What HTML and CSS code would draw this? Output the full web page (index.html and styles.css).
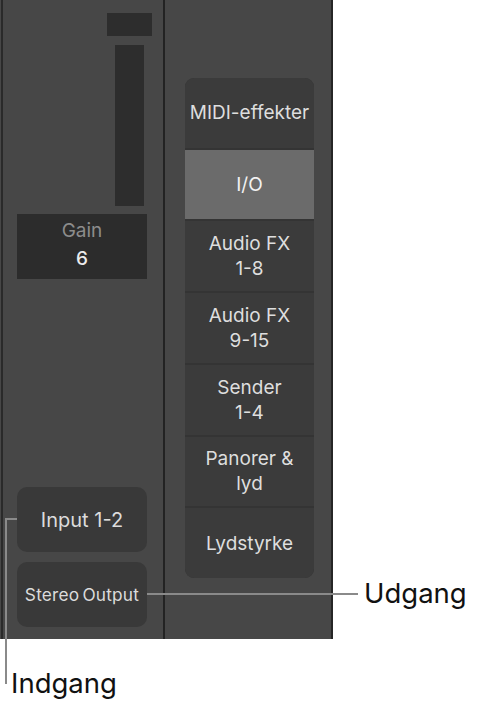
FILE: index.html
```html
<!DOCTYPE html>
<html>
<head>
<meta charset="utf-8">
<link rel="stylesheet" href="styles.css">
</head>
<body>
<div class="stage">
  <div class="panel">
    <div class="left">
      <div class="peak"></div>
      <div class="fader"></div>
      <div class="gain">
        <span class="gain-label">Gain</span>
        <span class="gain-value">6</span>
      </div>
      <div class="spacer"></div>
      <div class="slot slot-input">Input 1-2</div>
      <div class="slot slot-output">Stereo Output</div>
    </div>
    <div class="right">
      <div class="menu">
        <div class="item">MIDI-effekter</div>
        <div class="item active">I/O</div>
        <div class="item">Audio FX<br>1-8</div>
        <div class="item">Audio FX<br>9-15</div>
        <div class="item">Sender<br>1-4</div>
        <div class="item">Panorer &amp;<br>lyd</div>
        <div class="item">Lydstyrke</div>
      </div>
    </div>
  </div>
  <div class="callout-out-line"></div>
  <div class="callout-in-h"></div>
  <div class="callout-in-v"></div>
  <div class="label label-out">Udgang</div>
  <div class="label label-in">Indgang</div>
</div>
</body>
</html>
```

FILE: styles.css
```css
* { box-sizing: border-box; }
html, body { margin: 0; padding: 0; background: #ffffff; }
body {
  font-family: Inter, "Liberation Sans", sans-serif;
  width: 481px;
  height: 705px;
  overflow: hidden;
}
.stage { position: relative; width: 481px; height: 705px; }

.panel {
  display: flex;
  width: 333px;
  height: 639px;
  background: #474747;
  padding-left: 1px;
  border-right: 2px solid #262626;
}
.left {
  width: 164px;
  border-left: 2px solid #2a2a2a;
  border-right: 2px solid #232323;
  display: flex;
  flex-direction: column;
  align-items: flex-start;
  padding: 13px 0 12px 14px;
}
.peak {
  width: 45px;
  height: 23px;
  background: #2d2d2d;
  margin-left: 90px;
}
.fader {
  width: 29px;
  height: 161px;
  background: #2d2d2d;
  margin-left: 98px;
  margin-top: 9px;
}
.gain {
  width: 130px;
  height: 65px;
  margin-top: 8px;
  background: #2c2c2c;
  display: flex;
  flex-direction: column;
  align-items: center;
  justify-content: center;
  gap: 4px;
  font-size: 19px;
  line-height: 24px;
  padding-bottom: 3px;
}
.gain-label { color: #8c8c8c; }
.gain-value { color: #ececec; font-weight: 500; }
.spacer { flex: 1; }
.slot {
  width: 130px;
  height: 65px;
  border-radius: 10px;
  background: #393939;
  color: #dcdcdc;
  display: flex;
  align-items: center;
  justify-content: center;
  font-size: 20px;
}
.slot-output {
  margin-top: 10px;
  font-size: 17.3px;
  letter-spacing: 0.2px;
  word-spacing: -2px;
}
.right {
  flex: 1;
  padding: 78px 0 0 20px;
}
.menu {
  width: 129px;
  height: 500px;
  border-radius: 9px;
  overflow: hidden;
  background: #343434;
  display: flex;
  flex-direction: column;
  gap: 2px;
}
.item {
  flex: 1;
  background: #3b3b3b;
  color: #dedede;
  display: flex;
  align-items: center;
  justify-content: center;
  text-align: center;
  font-size: 19px;
  line-height: 25px;
}
.item.active { background: #6b6b6b; color: #f2f2f2; }

.callout-out-line {
  position: absolute;
  left: 147px;
  top: 593px;
  width: 211px;
  height: 2px;
  background: #8a8a8a;
}
.callout-in-h {
  position: absolute;
  left: 5px;
  top: 518px;
  width: 12px;
  height: 2px;
  background: #8a8a8a;
}
.callout-in-v {
  position: absolute;
  left: 5px;
  top: 518px;
  width: 2px;
  height: 166px;
  background: #8a8a8a;
}
.label {
  position: absolute;
  color: #111111;
  font-size: 27.5px;
  line-height: 32px;
}
.label-out { left: 364px; top: 577px; }
.label-in { left: 11px; top: 667px; }
```
